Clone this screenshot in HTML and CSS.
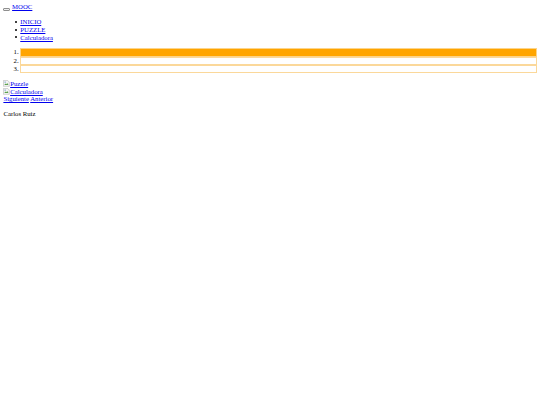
FILE: index.html
```html
<!DOCTYPE html>
<html lang="es">
<head>
<meta charset="utf-8">
<title>MOOC</title>
<link rel="stylesheet" href="styles.css">
</head>
<body class="page">
<nav class="navbar">
  <button class="toggle" type="button"></button> <a class="link" href="#">MOOC</a>
  <ul class="menu">
    <li class="item"><a class="link" href="#">INICIO</a></li>
    <li class="item"><a class="link" href="#">PUZZLE</a></li>
    <li class="item"><a class="link" href="#">Calculadora</a></li>
  </ul>
</nav>
<div class="carousel">
  <ol class="indicators">
    <li class="dot active"></li>
    <li class="dot"></li>
    <li class="dot"></li>
  </ol>
  <div class="slides">
    <div class="slide"><a class="link" href="#"><svg class="broken" viewBox="0 0 16 16"><path d="M1 1h10l4 4v10H1z" fill="#f4f4f4" stroke="#9a9a9a"/><path d="M3 12l3-4 2 2 2-3 3 5z" fill="#5aa04a"/><circle cx="5" cy="5" r="1.5" fill="#4a86c8"/></svg>Puzzle</a></div>
    <div class="slide"><a class="link" href="#"><svg class="broken" viewBox="0 0 16 16"><path d="M1 1h10l4 4v10H1z" fill="#f4f4f4" stroke="#9a9a9a"/><path d="M3 12l3-4 2 2 2-3 3 5z" fill="#5aa04a"/><circle cx="5" cy="5" r="1.5" fill="#4a86c8"/></svg>Calculadora</a></div>
  </div>
  <a class="link" href="#">Siguiente</a> <a class="link" href="#">Anterior</a>
</div>
<footer class="footer">
  <p class="author">Carlos Ruiz</p>
</footer>
</body>
</html>
```
FILE: styles.css
```css
html {
  background: #ffffff;
}
.page {
  margin: 3.4px;
  font-family: "Liberation Serif", "Times New Roman", serif;
  font-size: 6.75px;
  line-height: 7.76px;
  color: #000000;
}
.link {
  color: #0000ee;
  text-decoration: underline;
}
.toggle {
  display: inline-block;
  width: 7px;
  height: 3px;
  padding: 0;
  margin: 0;
  border: 1px solid #8f8f8f;
  border-radius: 1px;
  background: #efefef;
  vertical-align: -1px;
}
.menu {
  margin: 6.75px 0;
  padding-left: 16.9px;
  list-style: none;
}
.item::before {
  content: "";
  display: inline-block;
  width: 2.2px;
  height: 2.2px;
  margin-left: -5.6px;
  margin-right: 3.4px;
  border-radius: 50%;
  background: #000000;
  vertical-align: 1.2px;
}
.indicators {
  margin: 6.75px 0;
  padding-left: 16.9px;
}
.dot {
  height: 6.33px;
  border: 1px solid #fbd89a;
  background: #ffffff;
  line-height: 6.33px;
}
.dot.active {
  background: #ffa500;
  border-color: #fcd48a;
}
.slides {
  display: block;
}
.slide {
  display: block;
}
.broken {
  width: 6.75px;
  height: 6.75px;
  vertical-align: -1px;
}
.footer {
  display: block;
}
.author {
  margin: 6.75px 0;
}
```
